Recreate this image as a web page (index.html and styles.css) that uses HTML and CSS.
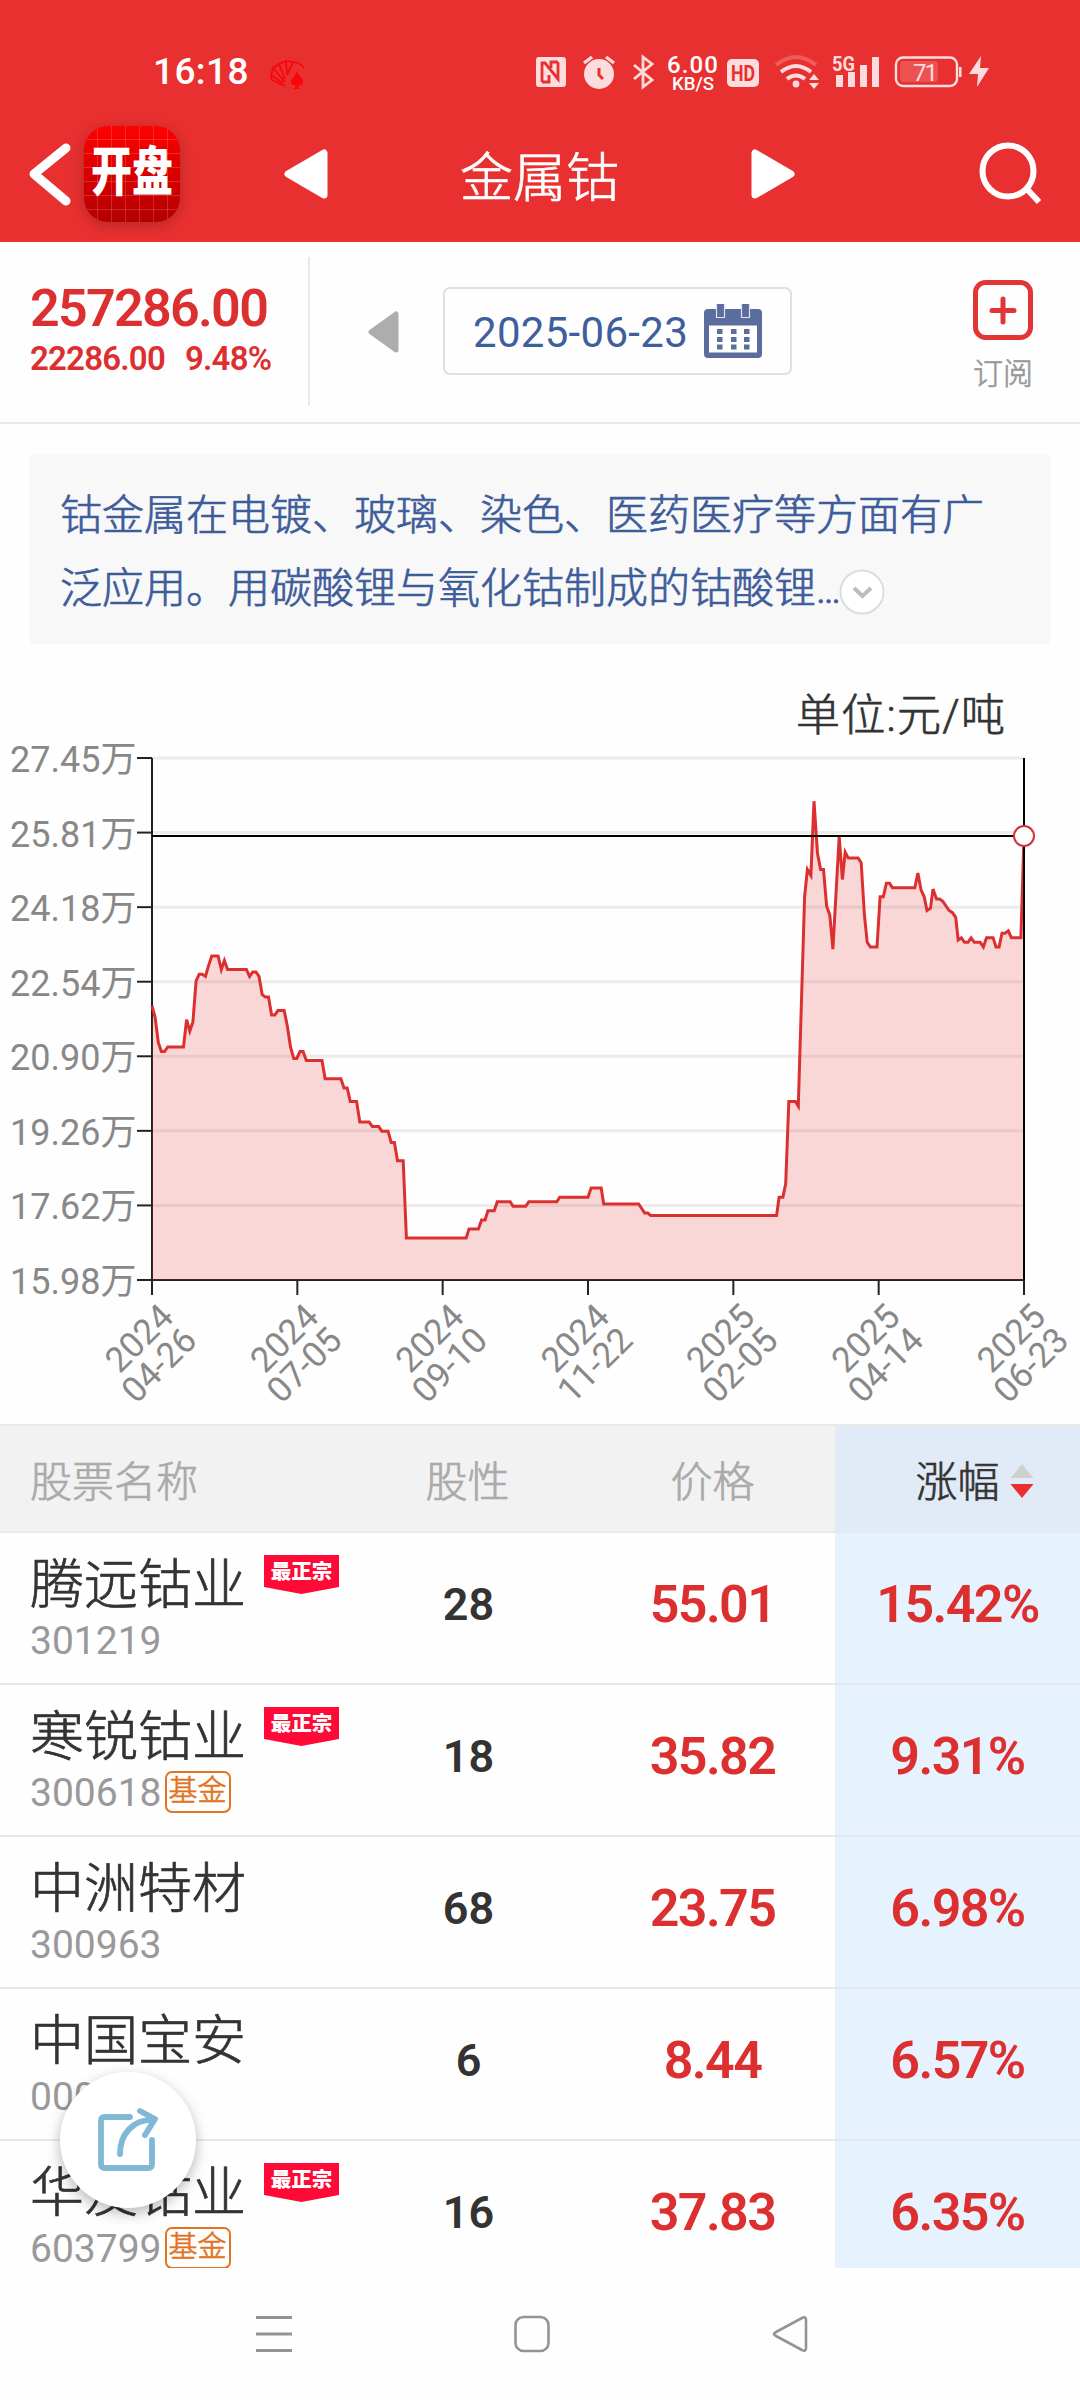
FILE: index.html
```html
<!DOCTYPE html>
<html lang="zh-CN">
<head>
  <meta charset="UTF-8">
  <title>金属钴</title>
  <link rel="stylesheet" href="styles.css">
</head>
<body>
<header class="header">
    <div class="status">
        <span class="time">16:18</span>
        <svg class="cards" width="36" height="30" viewBox="269 60 36 30" fill="none" stroke="#fb0509" stroke-width="1.7">
            <path d="M285 86l-13-6-1-5 12 8M271 75l2-7 12 14M273 68l6-4 6 15M279 64l7-3 1 14M286 61l7 1-5 12M293 62l-5 10M293 62c5 0 8 2 11 6"/>
            <path fill="#fb0509" stroke="none" d="M297 71c1 5 7 7 6 12-1 3-4 3-5 2l1 4h-5l2-4c-2 1-5 0-5-3 0-4 5-6 6-11z"/>
        </svg>
        <svg class="status-icons" width="460" height="42" viewBox="533 51 460 42" fill="#fcdcdc">
            <rect x="536" y="57" width="30" height="30" rx="3"/>
            <path d="M542 82V63h3l13 16V62M551 68v-6h7M542 82h7v-7" fill="none" stroke="#e93030" stroke-width="2.8"/>
            <circle cx="599" cy="74" r="15"/>
            <path d="M584 63l8-6M614 63l-8-6" stroke="#fcdcdc" stroke-width="3.4"/>
            <path d="M599 68v7l4 4" fill="none" stroke="#e93030" stroke-width="3"/>
            <path d="M634 65l18 15-9 7V57l9 7-18 15" fill="none" stroke="#fcdcdc" stroke-width="2.8"/>
            <text class="net" x="667" y="73" font-size="24" textLength="51">6.00</text>
            <text class="net" x="672" y="90" font-size="18" textLength="42" lengthAdjust="spacingAndGlyphs">KB/S</text>
            <rect x="727" y="59" width="32" height="28" rx="5"/>
            <text class="hd" x="743" y="81" font-size="22" text-anchor="middle" textLength="24" lengthAdjust="spacingAndGlyphs">HD</text>
            <g fill="none" stroke="#fcdcdc" stroke-width="4">
                <path d="M776 65q20-16 40 0" opacity=".25"/>
                <path d="M781 72q15-12 30 0"/>
                <path d="M787 79q9-7 18 0"/>
            </g>
            <circle cx="796" cy="84" r="3.4"/>
            <path d="M809 80l5-6 5 6zM809 83l5 6 5-6z"/>
            <text class="g5" x="832" y="71" font-size="21" textLength="23" lengthAdjust="spacingAndGlyphs">5G</text>
            <path d="M836 75h7v12h-7zM848 72h7v15h-7zM860 65h7v22h-7zM872 57h7v30h-7z"/>
            <rect x="896" y="57.5" width="61" height="28.5" rx="7" fill="none" stroke="#fcdcdc" stroke-width="2.4"/>
            <rect x="900" y="61" width="38" height="21" rx="4" opacity=".2"/>
            <rect x="959" y="67" width="2.5" height="10"/>
            <text class="bat" x="925.500" y="80.500" font-size="24" text-anchor="middle" textLength="25">71</text>
            <path d="M981 56l-12 18h9l-1 13 12-19h-9z"/>
        </svg>
    </div>
    <div class="titlebar">
        <svg class="back" width="44" height="68" viewBox="0 0 44 68"><path d="M37 8L5 34l32 27" fill="none" stroke="#fff" stroke-width="9" stroke-linecap="round" stroke-linejoin="round"/></svg>
        <div class="logo"><span>开盘</span></div>
        <svg class="prev" width="44" height="50" viewBox="0 0 44 50"><path d="M40 4v42L4 25z" fill="#fff" stroke="#fff" stroke-width="7" stroke-linejoin="round"/></svg>
        <h1>金属钴</h1>
        <svg class="next" width="44" height="50" viewBox="0 0 44 50"><path d="M4 4v42l36-21z" fill="#fff" stroke="#fff" stroke-width="7" stroke-linejoin="round"/></svg>
        <svg class="search" width="64" height="66" viewBox="0 0 64 66" fill="none" stroke="#fff" stroke-width="6"><circle cx="30" cy="30" r="25.500"/><path d="M48 47l13 14"/></svg>
    </div>
</header>

<section class="info">
    <div class="quote">
        <div class="price">257286.00</div>
        <div class="change"><span>22286.00</span><span>9.48%</span></div>
    </div>
    <svg class="date-prev" width="31" height="42" viewBox="0 0 31 42"><path d="M28 3v36L3 21z" fill="#adadad" stroke="#adadad" stroke-width="5" stroke-linejoin="round"/></svg>
    <div class="date">
        <span>2025-06-23</span>
        <svg width="58" height="54" viewBox="0 0 58 54" fill="#5b6c9e">
            <path fill-rule="evenodd" d="M4 5h50q4 0 4 4v41q0 4-4 4H4q-4 0-4-4V9q0-4 4-4zM5 21.500v27h48v-27z"/>
            <path d="M12.500-1h8v14.500h-8zM37.500-1h8v14.500h-8z" stroke="#dde1ee" stroke-width="1.200"/>
            <path d="M13 25h5.500v5H13zM27 25h5.500v5H27zM40 25h5.500v5H40zM13 33h5.500v5H13zM27 33h5.500v5H27zM40 33h5.500v5H40zM13 40.500h5.500v5H13zM27 40.500h5.500v5H27zM40 40.500h5.500v5H40z"/>
        </svg>
    </div>
    <div class="subscribe">
        <svg width="60" height="60" viewBox="0 0 60 60" fill="none" stroke="#e23536"><rect x="2.500" y="2.500" width="55" height="55" rx="10" stroke-width="5"/><path d="M30 19v23M19 30.500h22" stroke-width="5" stroke-linecap="round"/></svg>
        <span>订阅</span>
    </div>
</section>

<section class="desc">
    钴金属在电镀、玻璃、染色、医药医疗等方面有广<br>泛应用。用碳酸锂与氧化钴制成的钴酸锂<span class="dots">...</span><svg class="more" width="46" height="46" viewBox="0 0 46 46" fill="none"><circle cx="23" cy="23" r="21.500" fill="#fff" stroke="#dcdcdc" stroke-width="2"/><path d="M15 19l8.500 8 8.500-8" stroke="#bdbdbd" stroke-width="4"/></svg>
</section>

<svg id="chart" class="chart" width="1080" height="780" viewBox="0 644 1080 780"></svg>

<section class="table">
    <div class="row thead">
        <div class="name">股票名称</div>
        <div>股性</div>
        <div>价格</div>
        <div class="hot">涨幅<svg width="24" height="34" viewBox="0 0 24 34"><path d="M12 0l11.500 14H.5z" fill="#d0d0d0"/><path d="M12 34L.5 20h23z" fill="#e93030"/></svg></div>
    </div>
    <div id="stocks"></div>
    <div class="share">
        <svg width="60" height="66" viewBox="0 0 60 66" fill="none" stroke="#80b8d6" stroke-width="5.800" stroke-linecap="round" stroke-linejoin="round">
            <path d="M32 10H7q-4 0-4 4v43q0 4 4 4h43q4 0 4-4V33"/>
            <path d="M22 47C22 27 35 12 56 13M42 4l15 8-10 16"/>
        </svg>
    </div>
</section>

<nav class="navbar">
    <svg width="36" height="38" viewBox="0 0 36 38" stroke="#949494" stroke-width="3"><path d="M0 2.500h36M0 19h36M0 35.500h36"/></svg>
    <svg width="36" height="38" viewBox="0 0 36 38" fill="none" stroke="#949494" stroke-width="2.600"><rect x="1.500" y="2" width="33" height="34" rx="8"/></svg>
    <svg width="36" height="38" viewBox="0 0 36 38" fill="none" stroke="#949494" stroke-width="2.600"><path d="M34 5v28q0 4-4 2L4 21q-4-2 0-4L30 3q4-2 4 2z"/></svg>
</nav>

<script>
    // [trading day, price in 万]
    let prices = [
        [0,22], [1,21.75], [2,21.2], [3,21], [4,21], [5,21.1], [10,21.1], [11,21.7], [12,21.45], [13,21.65],
        [14,22.55], [15,22.7], [16,22.7], [17,22.65], [18,22.9], [19,23.1], [21,23.1], [22,22.8], [23,23], [24,22.8],
        [30,22.8], [31,22.65], [32,22.75], [33,22.75], [34,22.65], [35,22.25], [36,22.2], [37,22.2], [38,21.8], [39,21.8],
        [40,21.9], [42,21.9], [43,21.55], [44,21.1], [45,20.85], [46,20.85], [47,21], [48,21], [49,20.8], [54,20.8],
        [55,20.4], [60,20.4], [61,20.2], [62,20.2], [63,19.9], [65,19.9], [66,19.45], [69,19.45], [70,19.35], [72,19.35],
        [73,19.25], [75,19.25], [76,19], [77,19], [78,18.6], [79.8,18.6], [80.8,16.9], [99.8,16.9], [100.7,17.1], [103.7,17.1],
        [104.7,17.3], [105.8,17.3], [106.7,17.5], [108.7,17.5], [109.7,17.7], [113.8,17.7], [114.7,17.6], [118.7,17.6], [119.7,17.7],
        [128.6,17.7], [129.5,17.8], [138.5,17.8], [139.5,18], [142.7,18], [143.5,17.65], [154.6,17.65], [156.5,17.45], [157.5,17.45],
        [158.4,17.4], [198.4,17.4], [199.2,17.8], [200.4,17.8], [201.3,18.1], [202.3,19.9], [204.4,19.9], [205.3,19.8],
        [207.3,24.4], [208.2,25], [209.3,24.87], [210.3,26.5], [211.4,25.35], [212.4,25], [213.3,25], [214.3,24.2], [215.3,24],
        [216.3,23.25], [218.3,25.72], [219.3,24.78], [220.2,25.38], [221.2,25.25], [224.3,25.25], [225.3,25.15], [226.3,24],
        [227.2,23.4], [228.2,23.3], [230.3,23.3], [231.3,24.4], [232.3,24.4], [233.3,24.7], [234.3,24.7], [235.2,24.6],
        [242.3,24.6], [243.3,24.92], [244.3,24.55], [245.3,24.4], [246.2,24.1], [247.3,24.15], [248.1,24.57], [249.2,24.35],
        [250.2,24.35], [251.2,24.3], [253.2,24.1], [254.3,24.05], [255.3,23.95], [256.1,23.45], [257.1,23.5], [258.1,23.4],
        [259.2,23.4], [260.2,23.5], [261.2,23.4], [263.1,23.4], [264.1,23.3], [265.1,23.5], [267.2,23.5], [268.1,23.3],
        [269.1,23.3], [270,23.6], [271,23.6], [272,23.65], [273,23.5], [276,23.5], [277,25.73]
    ];
    let yLabels = ['27.45', '25.81', '24.18', '22.54', '20.90', '19.26', '17.62', '15.98'];
    let dates = ['2024 04-26', '2024 07-05', '2024 09-10', '2024 11-22', '2025 02-05', '2025 04-14', '2025 06-23'];
    let stocks = [
        { name: '腾远钴业', code: '301219', top: true, fund: false, nature: 28, price: '55.01', change: '15.42%' },
        { name: '寒锐钴业', code: '300618', top: true, fund: true, nature: 18, price: '35.82', change: '9.31%' },
        { name: '中洲特材', code: '300963', top: false, fund: false, nature: 68, price: '23.75', change: '6.98%' },
        { name: '中国宝安', code: '000009', top: false, fund: false, nature: 6, price: '8.44', change: '6.57%' },
        { name: '华友钴业', code: '603799', top: true, fund: true, nature: 16, price: '37.83', change: '6.35%' },
    ];

    let left = 152, right = 1024, top_ = 758, bottom = 1280;
    let px = d => (left + d * (right - left) / 277).toFixed(1);
    let py = v => (top_ + (27.45 - v) * (bottom - top_) / 11.47).toFixed(1);

    function drawChart() {
        let out = '<text class="unit" x="1005" y="731" text-anchor="end" textLength="209">单位:元/吨</text>';
        yLabels.forEach((label, i) => {
            let y = top_ + i * (bottom - top_) / 7;
            if(i < 7) out += `<path class="grid" d="M${left} ${y}H${right}"/>`;
            out += `<path class="axis" d="M137 ${y}H${left}"/>`;
            out += `<text class="label" x="136.5" y="${y + 14}" text-anchor="end">${label}万</text>`;
        });
        dates.forEach((date, i) => {
            let x = left + i * (right - left) / 6;
            let [year, day] = date.split(' ');
            out += `<path class="axis" d="M${x} ${bottom}v15"/>`;
            out += `<g class="label date-label" transform="translate(${x} ${bottom}) rotate(-45)" text-anchor="end"><text x="-11" y="44">${year}</text><text x="-11" y="77">${day}</text></g>`;
        });
        let line = prices.map(p => px(p[0]) + ',' + py(p[1])).join(' ');
        out += `<path class="axis" d="M${left} ${top_}V${bottom}H${right}"/>`;
        out += `<polygon class="area" points="${left},${bottom} ${line} ${right},${bottom}"/>`;
        out += `<polyline class="line" points="${line}"/>`;
        out += `<path class="cross" d="M${left} 836H${right}M${right} ${top_}V${bottom}"/>`;
        out += `<circle class="dot" cx="${right}" cy="836" r="10"/>`;
        document.getElementById('chart').innerHTML = out;
    }

    function drawStocks() {
        let list = document.getElementById('stocks');
        for(let s of stocks) {
            list.innerHTML += `<div class="row">
                <div class="name">
                    <div class="title">${s.name}${s.top ? '<span class="tag">最正宗</span>' : ''}</div>
                    <div class="code">${s.code}${s.fund ? '<span class="fund">基金</span>' : ''}</div>
                </div>
                <div class="nature">${s.nature}</div>
                <div class="num">${s.price}</div>
                <div class="num hot">${s.change}</div>
            </div>`;
        }
    }

    drawChart();
    drawStocks();
</script>
</body>
</html>
```
FILE: styles.css
```css
* {
    box-sizing: border-box;
}
body {
    margin: 0;
    width: 1080px;
    height: 2400px;
    overflow: hidden;
    background: #fefefe;
    color: #333;
    font-family: Roboto, "Noto Sans CJK SC", sans-serif;
}
svg {
    display: block;
    flex: none;
}
.header {
    height: 242px;
    background: #e93030;
    color: #fff;
}
.status {
    height: 114px;
    padding: 51px 0 0 153px;
    display: flex;
    align-items: flex-start;
}
.time {
    width: 116px;
    font-size: 37px;
    line-height: 42px;
    font-weight: 500;
    letter-spacing: .4px;
}
.cards {
    margin-top: 9px;
}
.status-icons {
    margin-left: 228px;
}
.net {
    fill: #fff;
    font-weight: 500;
}
.hd {
    fill: #e93030;
    font-weight: 700;
}
.g5 {
    font-weight: 700;
}
.bat {
    font-weight: 400;
}
.titlebar {
    height: 120px;
    padding-left: 29px;
    display: flex;
    align-items: center;
}
.logo {
    width: 96px;
    height: 96px;
    margin-left: 11px;
    border-radius: 24px;
    background:
        repeating-linear-gradient(90deg, transparent 0 13px, rgba(255,255,255,.16) 13px 14px),
        repeating-linear-gradient(transparent 0 13px, rgba(255,255,255,.16) 13px 14px),
        linear-gradient(#ff0000, #b40000);
    box-shadow: 0 3px 14px rgba(110,30,30,.45);
    font-size: 41px;
    font-weight: 900;
    line-height: 94px;
    text-align: center;
}
.logo span {
    display: block;
    transform: scaleY(1.3);
}
.prev {
    margin-left: 104px;
}
.titlebar h1 {
    width: 423px;
    margin: 9px 0 0;
    font-size: 53px;
    font-weight: 300;
    line-height: 60px;
    text-align: center;
}
/* thicken the light CJK weight a little */
h1, .subscribe, .desc, .thead, .title, .fund {
    -webkit-text-stroke: .7px currentColor;
}
.search {
    margin-left: 183px;
}
.info {
    height: 182px;
    border-bottom: 2px solid #e9e9e9;
    display: flex;
}
.quote {
    width: 310px;
    height: 149px;
    margin-top: 15px;
    padding: 22px 0 0 30px;
    border-right: 2px solid #e9e9e9;
    color: #dc2f30;
    font-weight: 600;
}
.price {
    font-size: 52px;
    line-height: 60px;
    letter-spacing: -1.7px;
}
.change {
    display: flex;
    gap: 20px;
    margin-top: 1px;
    font-size: 33px;
    line-height: 38px;
    letter-spacing: -.8px;
}
.date-prev {
    margin: 69px 0 0 58px;
}
.date {
    width: 349px;
    height: 88px;
    margin: 45px 0 0 44px;
    padding-left: 28px;
    border: 2px solid #e0e0e0;
    border-radius: 7px;
    display: flex;
    align-items: center;
    color: #3f5f9c;
    font-size: 42px;
}
.date span {
    width: 231px;
    padding-top: 2px;
    letter-spacing: .3px;
}
.subscribe {
    margin: 38px 0 0 181px;
    display: flex;
    flex-direction: column;
    align-items: center;
    color: #999;
    font-size: 30px;
    font-weight: 300;
    line-height: 36px;
}
.subscribe span {
    margin-top: 16px;
}
.desc {
    width: 1020px;
    height: 190px;
    margin: 30px 30px 0;
    padding: 25px 30px 0;
    background: #f8f8f8;
    color: #3d5c9a;
    font-size: 42px;
    font-weight: 300;
    line-height: 73px;
    white-space: nowrap;
}
.dots {
    letter-spacing: -2.4px;
}
.more {
    display: inline-block;
    vertical-align: -12px;
}
.unit {
    font-size: 44px;
    font-weight: 300;
    fill: #333;
    stroke: #333;
    stroke-width: .7px;
}
.label {
    font-size: 36px;
    fill: #888;
}
.date-label {
    font-size: 35px;
}
.grid {
    stroke: #ececec;
    stroke-width: 3;
}
.axis {
    fill: none;
    stroke: #222;
    stroke-width: 2;
}
.area {
    fill: rgba(233, 48, 48, .19);
}
.line {
    fill: none;
    stroke: #dc3030;
    stroke-width: 3;
}
.cross {
    fill: none;
    stroke: #000;
    stroke-width: 2;
}
.dot {
    fill: #fff;
    stroke: #d03535;
    stroke-width: 2;
}
.table {
    position: relative;
    height: 844px;
    overflow: hidden;
}
.row {
    height: 152px;
    display: grid;
    grid-template-columns: 345px 245px 245px 245px;
    border-bottom: 2px solid #e9e9e9;
}
.row > div {
    display: flex;
    align-items: center;
    justify-content: center;
    padding-bottom: 7px;
}
.row > .name {
    display: block;
    padding: 23px 0 0 30px;
}
.row > .hot {
    background: #e6f2fe;
}
.thead {
    height: 109px;
    border-top: 2px solid #e9e9e9;
    background: #f2f2f2;
    color: #aaa;
    font-size: 42px;
    font-weight: 300;
    line-height: 60px;
}
.row.thead > div {
    padding-top: 27px;
    padding-bottom: 22px;
}
.row.thead > .hot {
    background: #e0ebf7;
    color: #333;
    gap: 10px;
    padding-left: 34px;
}
.thead svg {
    margin-top: -5px;
}
.title {
    display: flex;
    font-size: 54px;
    font-weight: 300;
    line-height: 60px;
}
.tag {
    width: 75px;
    height: 39px;
    margin: -1px 0 0 18px;
    background: #ff0a37;
    clip-path: polygon(0 0, 100% 0, 100% 82%, 50% 100%, 0 82%);
    color: #fff;
    font-size: 20.5px;
    font-weight: 900;
    line-height: 35px;
    text-align: center;
    -webkit-text-stroke: 0;
}
.code {
    display: flex;
    align-items: center;
    margin-top: 2px;
    color: #999;
    font-size: 39px;
    line-height: 46px;
}
.fund {
    width: 66px;
    height: 42px;
    margin: -3px 0 0 3px;
    border: 2px solid #e07422;
    border-radius: 7px;
    color: #e07422;
    font-size: 29px;
    line-height: 37px;
    text-align: center;
    font-weight: 300;
}
.nature {
    padding-left: 2px;
    font-size: 45px;
    font-weight: 600;
}
.num {
    color: #dc2f30;
    font-size: 52px;
    font-weight: 600;
    letter-spacing: -1.6px;
}
.share {
    position: absolute;
    left: 60px;
    top: 648px;
    width: 136px;
    height: 136px;
    border-radius: 50%;
    background: #fff;
    box-shadow: 0 5px 14px rgba(0,0,0,.28);
    display: flex;
    align-items: center;
    justify-content: center;
}
.navbar {
    height: 132px;
    padding-left: 256px;
    display: flex;
    align-items: center;
    gap: 222px;
}
```
